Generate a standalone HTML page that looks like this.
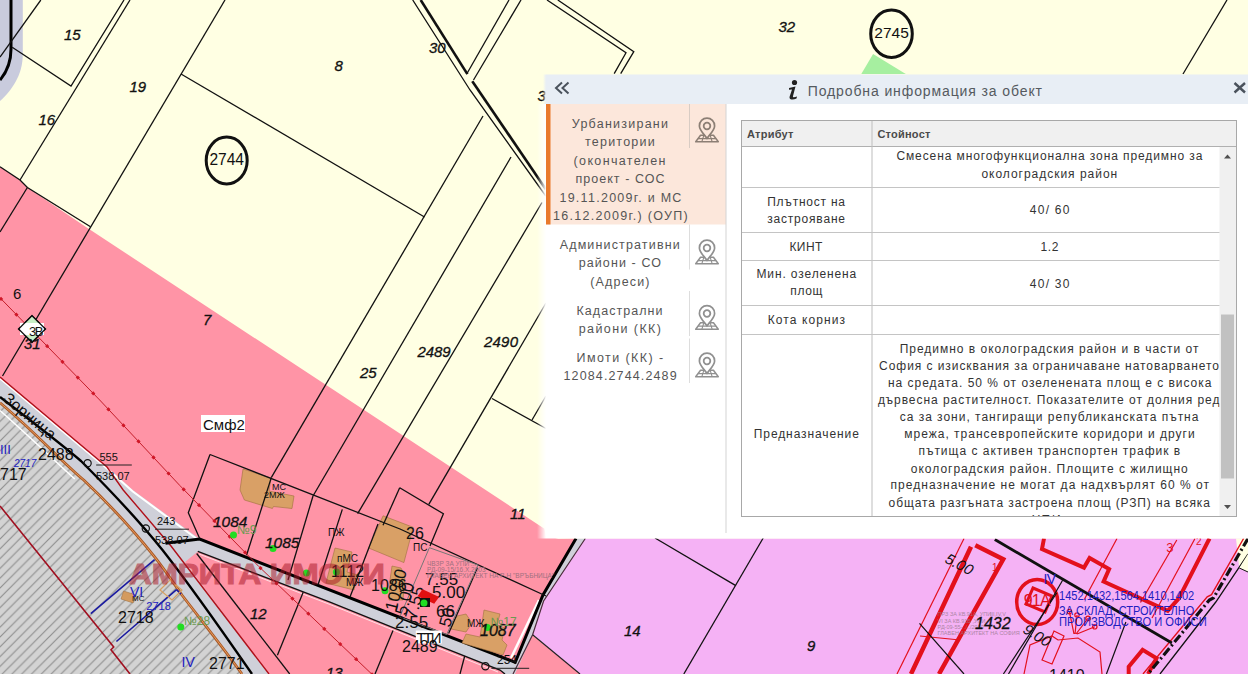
<!DOCTYPE html>
<html><head><meta charset="utf-8">
<style>
html,body{margin:0;padding:0;width:1248px;height:674px;overflow:hidden;background:#FFFFE3;}
svg{display:block;}
</style></head><body>
<svg id="map" width="1248" height="674" viewBox="0 0 1248 674" style="position:absolute;left:0;top:0">
<defs>
<pattern id="hatch" patternUnits="userSpaceOnUse" width="9.8" height="9.8">
<rect width="9.8" height="9.8" fill="#D3D3D3"/>
<path d="M-1,10.8 L10.8,-1 M-1,1 L1,-1 M8.8,10.8 L10.8,8.8" stroke="#8E8E8E" stroke-width="1.15"/>
</pattern>
</defs>
<rect width="1248" height="674" fill="#FFFFE3"/>
<!-- top-left lavender band -->
<path d="M0,0 L22.8,0 L22.8,54 C22.8,75 12,90 0,101 Z" fill="#C9CBDD"/>
<path d="M11,0 L11,49 C11,62 6,73 0,80" fill="none" stroke="#000" stroke-width="3"/>
<!-- pink zone -->
<path d="M0,166.7 L20,180 L27.4,187.5 L86,227 L544.4,528.7 L545.7,535.7 L558.3,538.8 L576,538.5 L532,634.9 L580.8,674 L0,674 Z" fill="#FF94A6"/>
<!-- lilac zone -->
<path d="M585.3,538.5 L1248,538.5 L1248,674 L580,674 L532.6,634.7 L543.6,601 Z" fill="#F5B2F5"/>
<path d="M1236,538.5 L1248,538.5 L1248,570 L1239,566 Z" fill="#FFFFE3"/>
<!-- hatched area -->
<path d="M0,402.7 C35,432 60,460 83.7,480 C110,505 135,532 154.6,556.9 C165,570 175,585 181.9,595 C205,625 225,650 242,674 L0,674 Z" fill="url(#hatch)"/>
<!-- road grey -->
<path d="M0,377 L107,467 L132.8,490 L199.7,539 L515.2,662.3 L543,595 L576,538.5 L585.3,538.5 L543.6,601 L532.6,634.7 L515,674 L269,674 L185,562 L197.8,551.4 L330,602.2 L390,626.4 L500,670 L505,674 L242,674 C225,650 205,625 181.9,595 C175,585 165,570 154.6,556.9 C135,532 110,505 83.7,480 C60,460 35,432 0,402.7 Z" fill="#CFD0D9"/>
<path d="M197.8,551.4 L330,602.2 L390,626.4 L500,670 L505,674 L269,674 L185,562 Z" fill="#FF94A6"/>
<!-- road lines -->
<g fill="none">
<path d="M0,378.5 L107,468.5 L132.8,491.5 L197,539" stroke="#fff" stroke-width="2"/>
<path d="M0,377 L107,467 L123.2,490 L171,546 L269,674" stroke="#B0101A" stroke-width="1.4"/>
<path d="M0,397 C30,420 60,443 81,461 C110,490 140,522 162.5,550 C190,585 225,635 252,674" stroke="#000" stroke-width="2.4"/>
<path d="M0,402.7 C35,432 60,460 83.7,480 C110,505 135,532 154.6,556.9 C165,570 175,585 181.9,595 C205,625 225,650 242,674" stroke="#A85A28" stroke-width="2.8"/>
<path d="M0,402.7 C35,432 60,460 83.7,480 C110,505 135,532 154.6,556.9 C165,570 175,585 181.9,595 C205,625 225,650 242,674" stroke="#F0A060" stroke-width="0.9"/>
<path d="M0,410.5 C30,437 55,461 74.8,479" stroke="#fff" stroke-width="1.5"/>
<path d="M539,600 L511,658" stroke="#fff" stroke-width="2.5"/><path d="M165.5,543.2 L199.7,539.1 L515.2,662.3 L543,595 L576,538.5" stroke="#000" stroke-width="3"/>
<path d="M197.8,551.4 L330,602.2 L390,626.4 L500,670 L505,674" stroke="#111" stroke-width="1.4"/><path d="M199,554 L330,604.5 L390,628.7 L498,672" stroke="#fff" stroke-width="1" opacity="0.7"/>
<path d="M196.7,553.5 L289.7,674" stroke="#111" stroke-width="1.3"/>
<path d="M585.3,538.5 L543.6,601 L532.6,634.7 L513,674" stroke="#4A2A3A" stroke-width="1.2"/>
<path d="M532.6,634.7 L580,674" stroke="#222" stroke-width="1.2"/>
</g>
<!-- hatched zone red/blue lines -->
<g fill="none">
<path d="M0,506 L113.7,647 L111,649.7 L130,674" stroke="#A01020" stroke-width="1.6"/>
<path d="M154.6,559.6 L90.8,613.7" stroke="#1A1AA0" stroke-width="1.6"/>
<path d="M176.5,589.7 L116.4,641.5" stroke="#1A1AA0" stroke-width="1.6"/>
<path d="M176.5,589.7 L181,594" stroke="#1A1AA0" stroke-width="1.6"/>
<path d="M160,590 L170,580 L182,590 L172,600 Z" stroke="#D8A060" stroke-width="1.2"/>
</g>
<path d="M123.6,591 L136,595 L133,603 L121,599 Z" fill="#D49B5E" stroke="#9A6A3A" stroke-width="0.5"/>
<!-- buildings -->
<g fill="#D9A066" stroke="#A0703E" stroke-width="0.6">
<path d="M243,469 L271,478 L269,491 L294,496 L292,508.5 L273.5,506.5 L272.4,508.5 L244.4,500 L240,490 Z"/>
<path d="M383.1,515.8 L413.2,527.3 L403.9,562.6 L368.6,548 Z"/>
<path d="M392,566 L401,568 L405,576 L403,600 L389,600 L390,580 Z"/>
<path d="M335,548 L352,552 L347,572 L358,575 L354,590 L326,583 Z"/>
<path d="M484,610 L500,614 L497,625 L505,628 L502,640 L507,645 L503,655 L462,643 L466,634 L480,637 Z"/>
<path d="M457,616 L466,614 L472,623 L466,632 L451,629 L453,622 Z"/>
</g>
<!-- cream area lines -->
<g fill="none" stroke="#111" stroke-width="1.3">
<path d="M40.8,0 L0,57"/>
<path d="M12.2,47.3 L71,86 L124,0"/>
<path d="M130,0 L20,180"/>
<path d="M0,166.7 L20,180 L27.4,187.5 L90.5,226.8"/>
<path d="M27.4,187.5 L0,232"/>
<path d="M225,0 L2.5,376"/>
<path d="M181,74 L424.5,217"/>
<path d="M483,116 L271.4,477.4"/>
<path d="M511,157 L313,496"/>
<path d="M542,202.5 L357.6,513.7"/>
<path d="M546,303 L428.8,504.4"/>
<path d="M412.7,0 L470,90 L545.8,196"/>
<path d="M509,0 L467,73.5"/>
<path d="M521,0 L473.5,80"/>
<path d="M547,0 L626,52.8 L614.2,73.6"/>
<path d="M557.8,0 L633.8,51.6 L620.7,73.6"/>
<path d="M1227,0 L1183,74"/>
<path d="M492,398.5 L546,428.5"/>
<path d="M532,420 L546,396"/>
</g>
<g fill="none" stroke="#111" stroke-width="2.6">
<path d="M420.7,0 L467.4,74.1"/>
<path d="M472.3,81.2 L545.8,189.2"/>
</g>
<!-- pink area lines -->
<g fill="none" stroke="#111" stroke-width="1.3">
<path d="M210,454.5 L188.3,512.7 L199.7,538.6"/>
<path d="M210,454.5 L400,529 L546,596"/>
<path d="M271.4,477.4 L246.5,555.3"/>
<path d="M313,496 L288,580"/>
<path d="M399.7,487.8 L443.4,513.8 L430,546"/>
<path d="M399.7,487.8 L383,525.2"/>
<path d="M342.3,509.4 L318,585"/>
<path d="M477.5,567.8 L448.6,633.5"/>
<path d="M378,524 L350,597"/>
<path d="M303.2,592.3 L277.4,655.2"/>
<path d="M393,630.5 L375,674"/>
<path d="M464.7,656 L460,674"/>
<path d="M655,538 L735.8,585.6"/>
<path d="M763.2,538 L683.8,674"/>
</g>
<g fill="none" stroke="#777" stroke-width="1">
<path d="M429.4,547.7 L478,565 L446.7,634.5 L399.8,617 Z"/>
</g>
<!-- red dotted lines -->
<g fill="none" stroke="#C41E2A" stroke-width="1">
<path d="M0,297.8 L99.7,400 L180,485.7 L259,566.7 L420,720"/>
</g>
<g fill="none" stroke="#D01828" stroke-width="3" stroke-dasharray="3 19">
<path d="M0,297.8 L99.7,400 L180,485.7 L259,566.7 L420,720"/>
</g>
<!-- lilac area red shapes -->
<g fill="none" stroke="#E3101C">
<path d="M975.3,545.3 L1003.2,559.3 L939,674 M971,546.7 L911,674" stroke-width="4.5"/>
<path d="M1044,538.5 L1042,549 L1084,567.6 L1089.6,557.9 L1109.1,569 L1103.6,581.6 L1167.7,610.9 L1178.9,598.3 L1209.5,538.5" stroke-width="4"/>
<path d="M1128.7,674 L1128.7,666.6 L1142.6,649.9 L1156.5,658.3 L1148,674" stroke-width="4"/>
<ellipse cx="1037.2" cy="601.9" rx="20.5" ry="22.5" stroke-width="3.5"/>
<path d="M1033,588 L1052,596 L1045,612 L1026,604 Z" stroke-width="3"/>
</g>
<g fill="none" stroke="#E3101C" stroke-width="1.2">
<path d="M964,538.5 L897,674"/>
<path d="M1117,538.5 L1084,600"/>
<path d="M1176.8,540 L1140.5,602.5"/>
<path d="M1195,538.5 L1152,618"/>
<path d="M1024,674 L1030,645 L1052,636 L1058,640 L1078,638 L1100,652 L1102,674"/>
<path d="M1042,660 L1054,631 L1064,636 L1052,664 Z"/>
<path d="M1074,634 L1069.4,611.6 M1075,634 L1077,615 M1076,634 L1088,618.4 M1077,634 L1094.8,626.8"/>
<circle cx="1069.4" cy="611.6" r="2.2"/>
<circle cx="1077" cy="615" r="2.2"/>
<circle cx="1088" cy="618.4" r="2.2"/>
<circle cx="1094.8" cy="626.8" r="2.2"/>
<path d="M1243.6,538.5 L1211.5,594.6 L1207.2,596.8 L1143,674" stroke-width="1.4"/>
<path d="M920,636 L960,640"/>
</g>
<g fill="none" stroke="#111">
<path d="M994.8,539.5 L1171.9,643" stroke-width="2.8"/>
<path d="M1062.6,580.3 L1008.5,674" stroke-width="1.2"/>
<path d="M1056.7,593 L1003.4,674" stroke-width="1.2"/>
<path d="M919.5,623.4 L964,674" stroke-width="1.2"/>
<path d="M1125.9,622 L1106.4,674" stroke-width="1.2"/>
<path d="M1248,538.5 L1213.6,597.8 L1209.4,600 L1148,674" stroke-width="3.2" stroke-dasharray="9 3 2 3"/>
<path d="M1248,554 L1215.8,602 L1160,674" stroke-width="1.3"/>
</g>
<path d="M1239.3,568 L1248,554 L1248,572 Z" fill="#FFFFE3"/><path d="M1239.3,568 L1248,572" stroke="#111" stroke-width="1"/>
<g font-family="Liberation Sans, sans-serif" font-size="5.5" fill="#9A7A90" opacity="0.8">
<text x="937.6" y="616">ПРЗ ЗА КВ.91А, УПИ</text>
<text x="937.6" y="622.5">VI ЗА КВ.91Б ,УПИ</text>
<text x="937.6" y="629">РД-09-55-../../2010</text>
<text x="937.6" y="635">ГЛАВЕН АРХИТЕКТ НА СОФИЯ</text>
<text x="990" y="616">III,IV,V</text>
</g>
<g font-family="Liberation Sans, sans-serif" font-size="13" fill="#E3101C">
<text x="1166.3" y="552.3">3</text>
<text x="1196" y="545" font-size="10">2</text>
<text x="992" y="571" font-size="10">1</text>
</g>
<!-- circles -->
<ellipse cx="226.7" cy="160.5" rx="20.5" ry="23.4" fill="none" stroke="#111" stroke-width="3"/>
<ellipse cx="891.5" cy="33.8" rx="20.8" ry="23.7" fill="none" stroke="#111" stroke-width="3"/>
<path d="M873.1,54 L861.3,74 L905.8,74 Z" fill="#A6EFA0"/>
<!-- diamond 3B -->
<path d="M32,315.6 L45.4,329 L32,342.4 L18.6,329 Z" fill="#C8F0C8" stroke="#111" stroke-width="1.3"/>
<rect x="20" y="323" width="24" height="12" fill="#fff"/>
<path d="M32,315.6 L45.4,329 L32,342.4 L18.6,329 Z" fill="none" stroke="#111" stroke-width="1.3"/>
<!-- labels white boxes -->
<rect x="201" y="415" width="44" height="17" fill="#fff"/>
<rect x="415.8" y="630.5" width="26" height="13" fill="#fff"/>
<!-- green dots -->
<g fill="#22DD22">
<circle cx="233.5" cy="535" r="3.5"/>
<circle cx="273" cy="548.5" r="3.5"/>
<circle cx="306.4" cy="573" r="3.5"/>
<circle cx="336.4" cy="572" r="3.5"/>
<circle cx="385" cy="590.7" r="3.5"/>
<circle cx="422.8" cy="603.6" r="3.5"/>
<circle cx="487.4" cy="627.5" r="3.5"/>
<circle cx="180.8" cy="627" r="3.5"/>
</g>
<g font-family="Liberation Sans, sans-serif" font-style="italic" font-size="15" fill="#111" stroke="#111" stroke-width="0.3">
<text x="64" y="39.5">15</text>
<text x="129.5" y="91.8">19</text>
<text x="38.5" y="125">16</text>
<text x="334.5" y="71">8</text>
<text x="429" y="53.4">30</text>
<text x="537.5" y="101.4">3</text>
<text x="778.5" y="31.6">32</text>
<text x="360" y="378">25</text>
<text x="417.5" y="357.3" textLength="33">2489</text>
<text x="484" y="347.3" textLength="34">2490</text>
<text x="203" y="324.5">7</text>
<text x="24" y="349.4">31</text>
<text x="510" y="518.5">11</text>
<text x="250" y="618.8">12</text>
<text x="326" y="678">13</text>
<text x="624" y="636">14</text>
<text x="807" y="650.5">9</text>
<text x="213" y="526.7" font-size="15.5">1084</text>
<text x="265" y="548.2" font-size="15.5">1085</text>
<text x="480" y="635.5" font-size="16">1087</text>
<text x="975" y="628.8" font-size="16">1432</text>
</g>
<g font-family="Liberation Sans, sans-serif" font-size="15" fill="#111">
<text x="209.4" y="164.7" font-size="16" textLength="34.6" lengthAdjust="spacingAndGlyphs">2744</text>
<text x="874.3" y="37.7" textLength="34.5" lengthAdjust="spacingAndGlyphs">2745</text>
<text x="13" y="298.7">6</text>
<text x="38" y="459.7" font-size="16">2488</text>
<text x="406" y="539.3" font-size="16">26</text>
<text x="402" y="652.4" font-size="16">2489</text>
<text x="371" y="591" font-size="16">1086</text>
<text x="118" y="622.5" font-size="16">2718</text>
<text x="209" y="669" font-size="16">2771</text>
<text x="1049" y="681" font-size="16">1410</text>
<text x="203" y="430" font-size="15">Смф2</text>
<text x="331" y="577" font-size="16">1112</text>
</g>
<g font-family="Liberation Sans, sans-serif" font-size="11" fill="#111">
<text x="99.5" y="460.6">555</text>
<text x="96" y="480">538.07</text>
<text x="157" y="525.4">243</text>
<text x="155" y="544.4">538.07</text>
<text x="416.5" y="643" font-size="15" textLength="25">ТТИ</text>
<text x="497" y="664.3" font-size="12">254</text>
<text x="413" y="550.7" font-size="10">ПС</text>
<text x="328" y="535.5" font-size="10">ПЖ</text>
<text x="337" y="562" font-size="10">пМС</text>
<text x="346" y="586" font-size="10">МЖ</text>
<text x="467" y="626.5" font-size="10">МЖ</text>
<text x="272" y="490" font-size="9">МС</text>
<text x="264" y="498" font-size="9">2МЖ</text>
<text x="132" y="601" font-size="8">МС</text>
</g>
<path d="M96.2,465 L131.8,465 M155,529.2 L189,529.2 M491.4,668.3 L529.2,668.3" stroke="#222" stroke-width="1"/>
<circle cx="87.6" cy="463.3" r="3.6" fill="none" stroke="#111" stroke-width="1.2"/>
<circle cx="145.8" cy="528.5" r="3.6" fill="none" stroke="#111" stroke-width="1.2"/>
<circle cx="485.4" cy="666.3" r="3.6" fill="none" stroke="#111" stroke-width="1.2"/>
<text x="29" y="335.5" font-family="Liberation Sans, sans-serif" font-size="13" fill="#111" textLength="14.5">3В</text>
<g font-family="Liberation Sans, sans-serif" fill="#2020C0">
<text x="0" y="454.4" font-size="13">III</text>
<text x="14" y="466.9" font-size="10" font-style="italic">2717</text>
<text x="130" y="597.3" font-size="14">VI</text>
<text x="146.3" y="610" font-size="11">2718</text>
<text x="181.6" y="666.7" font-size="14">IV</text>
<text x="1043.6" y="584.4" font-size="14" textLength="12.6">IV</text>
<text x="1059" y="599.7" font-size="12.5" textLength="135.2" lengthAdjust="spacingAndGlyphs">1452,1432,1564,1410,1402</text>
<text x="1059" y="615" font-size="12.5" textLength="135.2" lengthAdjust="spacingAndGlyphs">ЗА СКЛАД, СТРОИТЕЛНО</text>
<text x="1059" y="625.5" font-size="12.5" textLength="147.7" lengthAdjust="spacingAndGlyphs">ПРОИЗВОДСТВО И ОФИСИ</text>
</g>
<g font-family="Liberation Sans, sans-serif" fill="#6A9A50" font-size="12">
<text x="237" y="534">№9</text>
<text x="184" y="625">№28</text>
<text x="490.4" y="625.5">№17</text>
</g>
<text x="0" y="480" font-family="Liberation Sans, sans-serif" font-size="16" fill="#111">717</text>
<text x="1023.7" y="605.7" font-family="Liberation Sans, sans-serif" font-size="16" fill="#E3101C" textLength="27">91А</text>
<text transform="translate(944,562) rotate(28)" font-family="Liberation Sans, sans-serif" font-style="italic" font-size="15" fill="#111">5.00</text>
<text transform="translate(1022,632) rotate(32)" font-family="Liberation Sans, sans-serif" font-style="italic" font-size="15" fill="#111">9.00</text>
<text transform="translate(2,400) rotate(40)" font-family="Liberation Sans, sans-serif" font-size="16" fill="#111">Зорница</text>
<g font-family="Liberation Sans, sans-serif" font-size="17" fill="#111">
<text transform="translate(396,612) rotate(-75)">10.00</text>
<text transform="translate(406,616) rotate(-75)">5.00</text>
<text transform="translate(416,620) rotate(-75)">7.55</text>
<text x="425" y="585">7.55</text>
<text x="432" y="598">5.00</text>
<text x="436" y="617">66</text>
<text x="395" y="628">2.55</text>
<text transform="translate(450,628) rotate(-75)">50</text>
</g>
<path d="M421,591 L439,594 L436,602 L418,599 Z" fill="#E01010" transform="rotate(15 428 596)"/>
<rect x="420" y="598" width="10" height="9" fill="#111"/>
<circle cx="424" cy="603" r="3.5" fill="#22DD22"/>
<g font-family="Liberation Sans, sans-serif" font-size="6.5" fill="#A07080">
<text x="427" y="566">ЧВЗР ЗА УПИ ...</text>
<text x="427" y="572">РД-09-15/16.Х.2003</text>
<text x="427" y="578">ГЛАВЕН АРХИТЕКТ НА Р-Н "ВРЪБНИЦА"</text>
</g>
<!-- watermark -->
<g opacity="0.52"><text x="129" y="583.7" font-family="Liberation Sans, sans-serif" font-weight="bold" font-size="29" fill="#AA1928" stroke="#AA1928" stroke-width="1.1" textLength="255.7" lengthAdjust="spacingAndGlyphs">АМРИТА ИМОТИ</text></g>
</svg>

<svg id="pnl" width="1248" height="674" viewBox="0 0 1248 674" style="position:absolute;left:0;top:0">
<defs>
<g id="pin">
<path d="M0,-12.8 C-4.3,-12.8 -7.6,-9.4 -7.6,-5.1 C-7.6,-1.2 -3.2,3.2 0,7.3 C3.2,3.2 7.6,-1.2 7.6,-5.1 C7.6,-9.4 4.3,-12.8 0,-12.8 Z" fill="none" stroke-width="1.7"/>
<circle cx="0" cy="-5" r="3.3" fill="none" stroke-width="1.8"/>
<path d="M-2.5,4.3 L-6.45,4.3 L-11.3,10.8 L11.3,10.8 L6.45,4.3 L2.5,4.3" fill="none" stroke-width="1.5" stroke-linejoin="round"/>
<path d="M-8.8,7.6 L8.8,7.6 M-3.2,4.3 L-5.2,10.8 M3.2,4.3 L5.2,10.8" fill="none" stroke-width="1.1"/>
</g>
</defs>
<defs>
<linearGradient id="fadeW" x1="0" x2="1" y1="0" y2="0">
<stop offset="0" stop-color="#fff" stop-opacity="0"/>
<stop offset="1" stop-color="#fff" stop-opacity="1"/>
</linearGradient>
<linearGradient id="fadeB" x1="0" x2="1" y1="0" y2="0">
<stop offset="0" stop-color="#E8EEF5" stop-opacity="0"/>
<stop offset="1" stop-color="#E8EEF5" stop-opacity="1"/>
</linearGradient>
</defs>
<rect x="537" y="104" width="9" height="434.5" fill="url(#fadeW)"/>
<rect x="543" y="74.5" width="3" height="29.5" fill="url(#fadeB)"/>
<!-- panel bg -->
<rect x="546" y="74.5" width="702" height="30" fill="#E8EEF5"/>
<rect x="546" y="104" width="702" height="434.5" fill="#FFFFFF"/>
<!-- item1 highlight -->
<rect x="546" y="104" width="180" height="120.5" fill="#FCE7DB"/>
<rect x="546" y="104" width="4.5" height="120.5" fill="#E97A2C"/>
<!-- left divider -->
<rect x="725.5" y="104" width="1" height="429" fill="#D4D4D4"/>
<!-- icon dividers -->
<rect x="689" y="104" width="1" height="44" fill="#D8CCC4"/>
<rect x="689" y="224.5" width="1" height="45" fill="#DDDDDD"/>
<rect x="689" y="291" width="1" height="45" fill="#DDDDDD"/>
<rect x="689" y="338.5" width="1" height="44.5" fill="#DDDDDD"/>
<!-- pins -->
<use href="#pin" x="707" y="131" stroke="#8C7F75"/>
<use href="#pin" x="707" y="253" stroke="#909090"/>
<use href="#pin" x="707" y="318.5" stroke="#909090"/>
<use href="#pin" x="707" y="366" stroke="#909090"/>
<!-- header icons -->
<path d="M562,82.5 L556,88 L562,93.5 M568.5,82.5 L562.5,88 L568.5,93.5" fill="none" stroke="#4A525C" stroke-width="2"/>
<path d="M1234.5,83 L1245,92.5 M1245,83 L1234.5,92.5" fill="none" stroke="#4A525C" stroke-width="2.4"/>
<!-- info i -->
<circle cx="794.5" cy="82.5" r="2.6" fill="#222"/>
<path d="M789,88 L795.5,86.5 L793,96 C792.6,97.6 794,97.6 797,96.5 L796.5,98.5 C794,99.8 790.5,100 789.8,98.5 C789.3,97.5 789.6,96.5 790,95.5 L792,89.5 L789,89.8 Z" fill="#222"/>
<g font-family="Liberation Sans, sans-serif">
<text x="807.7" y="95.6" font-size="14" fill="#555A60" textLength="234.3" lengthAdjust="spacing">Подробна информация за обект</text>
<g font-size="12.5" fill="#555555">
<text x="571.8" y="128" textLength="96.2" lengthAdjust="spacing">Урбанизирани</text>
<text x="585" y="146" textLength="69.7" lengthAdjust="spacing">територии</text>
<text x="573.6" y="164.5" textLength="91.8" lengthAdjust="spacing">(окончателен</text>
<text x="575.4" y="182.6" textLength="89.1" lengthAdjust="spacing">проект - СОС</text>
<text x="559.4" y="201.5" textLength="122" lengthAdjust="spacing">19.11.2009г. и МС</text>
<text x="553" y="219.5" textLength="134.6" lengthAdjust="spacing">16.12.2009г.) (ОУП)</text>
<text x="559.7" y="249.1" textLength="120" lengthAdjust="spacing">Административни</text>
<text x="578.7" y="267.4" textLength="82.3" lengthAdjust="spacing">райони - СО</text>
<text x="590.2" y="285.5" textLength="59.3" lengthAdjust="spacing">(Адреси)</text>
<text x="576.5" y="315" textLength="86" lengthAdjust="spacing">Кадастрални</text>
<text x="578.7" y="332.5" textLength="82.3" lengthAdjust="spacing">райони (КК)</text>
<text x="576.5" y="361.8" textLength="86.7" lengthAdjust="spacing">Имоти (КК) -</text>
<text x="563.5" y="379.7" textLength="113.1" lengthAdjust="spacing">12084.2744.2489</text>
</g>
</g>
<!-- table -->
<rect x="741.5" y="120.5" width="495" height="396" fill="#FFFFFF" stroke="#A8A8A8" stroke-width="1"/>
<rect x="742" y="121" width="494" height="25.5" fill="#F0F0F0"/>
<rect x="742" y="146" width="494" height="1" fill="#B0B0B0"/>
<rect x="871.5" y="121" width="1" height="395" fill="#BDBDBD"/>
<!-- scrollbar -->
<rect x="1219.5" y="147" width="16.5" height="369" fill="#F0F0F0"/>
<rect x="1221" y="314.5" width="13" height="164" fill="#C1C1C1"/>
<path d="M1224,158.5 L1231,158.5 L1227.5,154.5 Z" fill="#505050"/>
<path d="M1224,505 L1231,505 L1227.5,509 Z" fill="#505050"/>
<!-- row borders -->
<g fill="#C4C4C4">
<rect x="742" y="187" width="477.5" height="1"/>
<rect x="742" y="232" width="477.5" height="1"/>
<rect x="742" y="260" width="477.5" height="1"/>
<rect x="742" y="305" width="477.5" height="1"/>
<rect x="742" y="334" width="477.5" height="1"/>
</g>
<g font-family="Liberation Sans, sans-serif">
<text x="747" y="138.3" font-size="11" font-weight="bold" fill="#4A4A4A" textLength="46.4" lengthAdjust="spacing">Атрибут</text>
<text x="877.4" y="138.3" font-size="11" font-weight="bold" fill="#4A4A4A" textLength="53" lengthAdjust="spacing">Стойност</text>
<g font-size="12" fill="#333333">
<text x="896.4" y="160" textLength="306" lengthAdjust="spacing">Смесена многофункционална зона предимно за</text>
<text x="981.4" y="177.7" textLength="135.8" lengthAdjust="spacing">окологрaдския район</text>
<text x="767.2" y="205.9" textLength="77.8" lengthAdjust="spacing">Плътност на</text>
<text x="767.2" y="222.8" textLength="77.8" lengthAdjust="spacing">застрояване</text>
<text x="1029.8" y="213.7" textLength="39.6" lengthAdjust="spacing">40/ 60</text>
<text x="789.4" y="250.8" textLength="33" lengthAdjust="spacing">КИНТ</text>
<text x="1040.5" y="250.8" textLength="18" lengthAdjust="spacing">1.2</text>
<text x="756.5" y="278.4" textLength="99.8" lengthAdjust="spacing">Мин. озеленена</text>
<text x="790.3" y="295.4" textLength="32.1" lengthAdjust="spacing">площ</text>
<text x="1029.8" y="288.3" textLength="39.6" lengthAdjust="spacing">40/ 30</text>
<text x="767.7" y="323.5" textLength="77.3" lengthAdjust="spacing">Кота корниз</text>
<text x="753.8" y="437.9" textLength="105.1" lengthAdjust="spacing">Предназначение</text>
</g>
<svg x="872" y="335" width="347.5" height="181" viewBox="872 335 347.5 181" overflow="hidden">
<g font-size="12" fill="#333333" font-family="Liberation Sans, sans-serif">
<text x="899.7" y="353" textLength="298.7" lengthAdjust="spacing">Предимно в окологрaдския район и в части от</text>
<text x="879.1" y="370" textLength="339.9" lengthAdjust="spacing">София с изисквания за ограничаване натоварването</text>
<text x="888" y="386.8" textLength="323.4" lengthAdjust="spacing">на средата. 50 % от озеленената площ е с висока</text>
<text x="877.9" y="403.8" textLength="341.5" lengthAdjust="spacing">дървесна растителност. Показателите от долния ред</text>
<text x="899.7" y="420.6" textLength="298.7" lengthAdjust="spacing">са за зони, тангиращи републиканската пътна</text>
<text x="904.3" y="438" textLength="290.3" lengthAdjust="spacing">мрежа, трансевропейските коридори и други</text>
<text x="918.4" y="454.7" textLength="261.8" lengthAdjust="spacing">пътища с активен транспортен трафик в</text>
<text x="910.8" y="472.5" textLength="277" lengthAdjust="spacing">окологрaдския район. Площите с жилищно</text>
<text x="890.6" y="489.3" textLength="318.4" lengthAdjust="spacing">предназначение не могат да надхвърлят 60 % от</text>
<text x="888.6" y="506.8" textLength="321.3" lengthAdjust="spacing">общата разгъната застроена площ (РЗП) на всяка</text>
<text x="1032" y="523.8" textLength="34" lengthAdjust="spacing">УПИ.</text>
</g>
</svg>
</g>
</svg>

</body></html>
